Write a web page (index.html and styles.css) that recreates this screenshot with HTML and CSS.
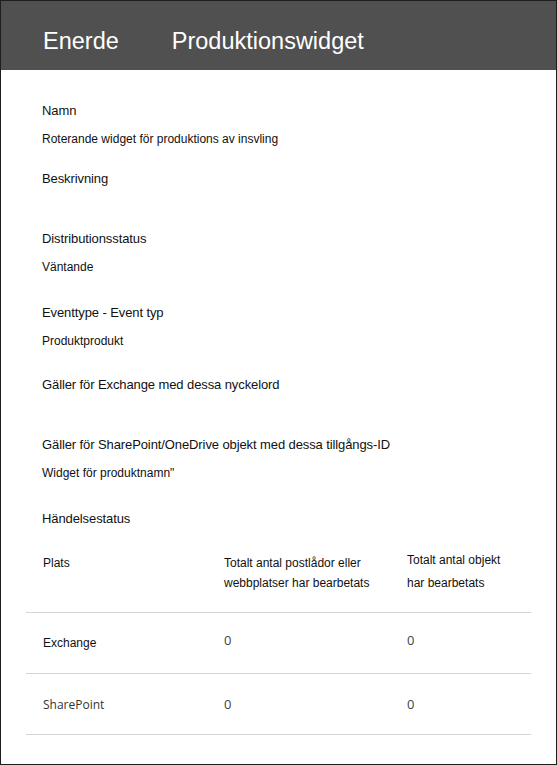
FILE: index.html
```html
<!DOCTYPE html>
<html lang="sv">
<head>
<meta charset="utf-8">
<link rel="stylesheet" href="styles.css">
</head>
<body>
<div class="frame">
  <header class="header">
    <span class="h-first">Enerde</span>
    <span class="h-second">Produktionswidget</span>
  </header>
  <main class="content">
    <div class="field">
      <div class="label">Namn</div>
      <div class="value gap-s">Roterande widget för produktions av insvling</div>
    </div>
    <div class="field">
      <div class="label">Beskrivning</div>
      <div class="value empty"></div>
    </div>
    <div class="field">
      <div class="label">Distributionsstatus</div>
      <div class="value gap-l">Väntande</div>
    </div>
    <div class="field">
      <div class="label">Eventtype - Event typ</div>
      <div class="value">Produktprodukt</div>
    </div>
    <div class="field">
      <div class="label">Gäller för Exchange med dessa nyckelord</div>
      <div class="value empty"></div>
    </div>
    <div class="field">
      <div class="label">Gäller för SharePoint/OneDrive objekt med dessa tillgångs-ID</div>
      <div class="value gap-l">Widget för produktnamn"</div>
    </div>
    <div class="field">
      <div class="label">Händelsestatus</div>
    </div>
    <div class="table">
      <div class="trow thead">
        <div class="c1">Plats</div>
        <div class="c2">Totalt antal postlådor eller<br>webbplatser har bearbetats</div>
        <div class="c3"><span class="raise">Totalt antal objekt</span><br>har bearbetats</div>
      </div>
      <div class="trow tbody">
        <div class="c1 loc-ex">Exchange</div>
        <div class="c2 num raise">0</div>
        <div class="c3 num raise">0</div>
      </div>
      <div class="trow tbody">
        <div class="c1 loc-sp">SharePoint</div>
        <div class="c2 num">0</div>
        <div class="c3 num">0</div>
      </div>
    </div>
  </main>
</div>
</body>
</html>
```
FILE: styles.css
```css
* { box-sizing: border-box; }
html, body { margin: 0; padding: 0; background: #fff; }
.frame {
  width: 557px;
  height: 765px;
  border: 1px solid #1e1e1e;
  font-family: "Liberation Sans", Arial, sans-serif;
  color: #111;
  overflow: hidden;
}
.header {
  height: 69px;
  background: #505050;
  color: #fff;
  display: flex;
  align-items: center;
  padding: 11px 0 0 42px;
  font-size: 23.5px;
}
.h-second { margin-left: 53px; }
.content { padding: 31px 0 0 0; }
.field { padding-left: 41px; }
.label { font-size: 13px; line-height: 20px; letter-spacing: -0.1px; }
.value { font-size: 12px; line-height: 16px; margin-top: 10px; margin-bottom: 26px; }
.value.gap-s { margin-bottom: 22px; }
.value.gap-l { margin-bottom: 28px; }
.value.empty { height: 30px; margin: 0 0 10px 0; }
.table { margin: 24px 25px 0 25px; }
.trow {
  display: grid;
  grid-template-columns: 181px 183px 1fr;
  padding-left: 17px;
  border-bottom: 1px solid #d6d6d6;
}
.thead { font-size: 12px; line-height: 20px; padding-bottom: 19px; }
.raise { position: relative; top: -3px; }
.tbody { height: 61px; align-items: center; }
.tbody .c1 { font-size: 12px; }
.loc-sp { font-family: "Open Sans", sans-serif; font-size: 13.8px; color: #333; }
.num { font-family: "Open Sans", sans-serif; font-size: 13px; color: #444; }
```
